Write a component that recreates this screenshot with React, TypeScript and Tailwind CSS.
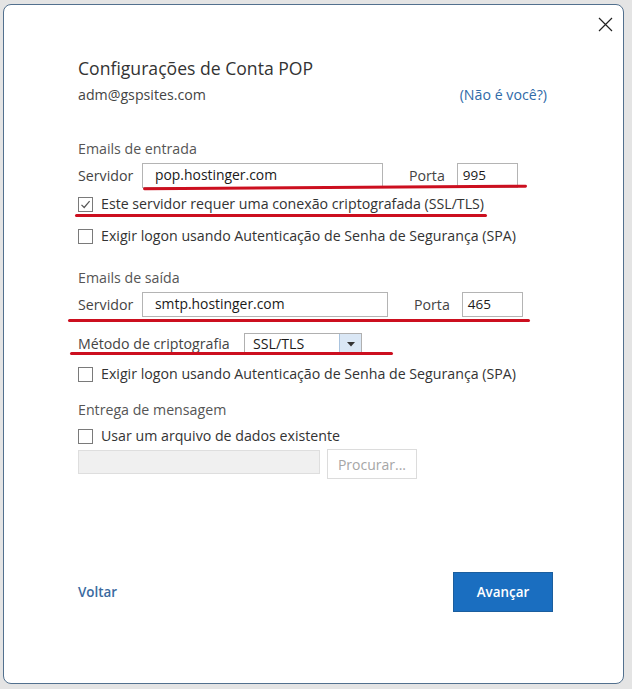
import { useState } from "react";

const font = { fontFamily: '"Open Sans", "Noto Sans", sans-serif' };

function Check({ checked, label }: { checked?: boolean; label: string }) {
  return (
    <div className="flex h-[20px] items-center">
      <span className="flex h-[15px] w-[15px] items-center justify-center border border-[#7a7a7a] bg-white">
        {checked && (
          <svg width="11" height="11" viewBox="0 0 11 11">
            <path d="M1.5 5.8 L4.2 8.5 L9.6 2.2" fill="none" stroke="#555" strokeWidth="1.2" />
          </svg>
        )}
      </span>
      <span className="ml-[8px] text-[14.2px] text-[#333]">{label}</span>
    </div>
  );
}

function ServerRow({
  value,
  port,
  inputW,
}: {
  value: string;
  port: string;
  inputW: string;
}) {
  return (
    <div className="flex h-[25px] items-center">
      <span className="w-[64px] text-[14.2px] text-[#444]">Servidor</span>
      <div className={`flex h-[25px] items-center border border-[#b4b4b4] bg-white pl-[12px] ${inputW}`}>
        <span className="text-[13.9px] text-[#1a1a1a]">{value}</span>
      </div>
      <span className="ml-[26px] text-[14.2px] text-[#444]">Porta</span>
      <div className="ml-[12px] flex h-[25px] w-[61px] items-center border border-[#b4b4b4] bg-white pl-[5px]">
        <span className="text-[13.5px] text-[#1a1a1a]">{port}</span>
      </div>
    </div>
  );
}

export default function App() {
  const [useExisting, setUseExisting] = useState(false);

  return (
    <div className="h-[689px] w-[632px] overflow-hidden bg-[#e4e4e4] pl-[3px] pt-[4px]" style={font}>
      <div className="relative h-[680px] w-[621px] rounded-[8px] border border-[#52708e] bg-white">
        {/* close */}
        <div className="flex justify-end pr-[10px] pt-[12px]">
          <svg width="15" height="15" viewBox="0 0 15 15">
            <path d="M1 1 L14 14 M14 1 L1 14" stroke="#222" strokeWidth="1.2" />
          </svg>
        </div>

        <div className="pl-[74px] pr-[76px]">
          <div className="mt-[24px] flex h-[24px] items-center text-[17.6px] text-[#333]">
            Configurações de Conta POP
          </div>
          <div className="mt-[5px] flex h-[20px] items-center justify-between">
            <span className="text-[14.2px] text-[#444]">adm@gspsites.com</span>
            <span className="text-[14.2px] text-[#2f6aa7]">(Não é você?)</span>
          </div>

          <div className="mt-[34px] flex h-[20px] items-center text-[14.2px] text-[#555]">
            Emails de entrada
          </div>
          <div className="mt-[4px]">
            <ServerRow value="pop.hostinger.com" port="995" inputW="w-[241px]" />
          </div>
          <div className="mt-[6px]">
            <Check checked label="Este servidor requer uma conexão criptografada (SSL/TLS)" />
          </div>
          <div className="mt-[12px]">
            <Check label="Exigir logon usando Autenticação de Senha de Segurança (SPA)" />
          </div>

          <div className="mt-[22px] flex h-[20px] items-center text-[14.2px] text-[#555]">
            Emails de saída
          </div>
          <div className="mt-[4px]">
            <ServerRow value="smtp.hostinger.com" port="465" inputW="w-[246px]" />
          </div>

          <div className="mt-[16px] flex h-[22px] items-center">
            <span className="w-[166px] text-[14.2px] text-[#444]">Método de criptografia</span>
            <div className="flex h-[22px] w-[118px] items-stretch border border-[#b0b0b0] bg-white">
              <span className="flex flex-1 items-center pl-[8px] text-[14.2px] text-[#1a1a1a]">SSL/TLS</span>
              <span className="flex w-[22px] items-center justify-center border-l border-[#a9c3de] bg-[#dae7f5]">
                <svg width="8" height="5" viewBox="0 0 8 5">
                  <path d="M0 0 H8 L4 4.5 Z" fill="#333" />
                </svg>
              </span>
            </div>
          </div>
          <div className="mt-[9px]">
            <Check label="Exigir logon usando Autenticação de Senha de Segurança (SPA)" />
          </div>

          <div className="mt-[16px] flex h-[20px] items-center text-[14.2px] text-[#555]">
            Entrega de mensagem
          </div>
          <div className="mt-[6px]" onClick={() => setUseExisting(!useExisting)}>
            <Check checked={useExisting} label="Usar um arquivo de dados existente" />
          </div>
          <div className="mt-[3px] flex items-start">
            <div className="mt-[1px] h-[24px] w-[242px] border border-[#dedede] bg-[#f0f0f0]" />
            <div className="ml-[7px] flex h-[30px] w-[90px] items-center justify-center border border-[#dcdcdc] bg-white text-[14px] text-[#a6a6a6]">
              Procurar...
            </div>
          </div>

          <div className="mt-[93px] flex items-center justify-between">
            <span className="text-[13.4px] font-semibold text-[#3a6aa0]">Voltar</span>
            <button className="-mr-[6px] flex h-[40px] w-[100px] items-center justify-center border border-[#1b5e9e] bg-[#1a6ec0] text-[13.4px] font-semibold text-white">
              Avançar
            </button>
          </div>
        </div>

        {/* red annotation marks */}
        <div className="absolute left-[139px] top-[181px] h-[3px] w-[384px] -rotate-[0.4deg] rounded-full bg-[#cc0f1f]" />
        <div className="absolute left-[71px] top-[209px] h-[3px] w-[412px] rounded-full bg-[#cc0f1f]" />
        <div className="absolute left-[64px] top-[314px] h-[3px] w-[462px] rounded-full bg-[#cc0f1f]" />
        <div className="absolute left-[66px] top-[347px] h-[3px] w-[323px] rounded-full bg-[#cc0f1f]" />
      </div>
    </div>
  );
}
